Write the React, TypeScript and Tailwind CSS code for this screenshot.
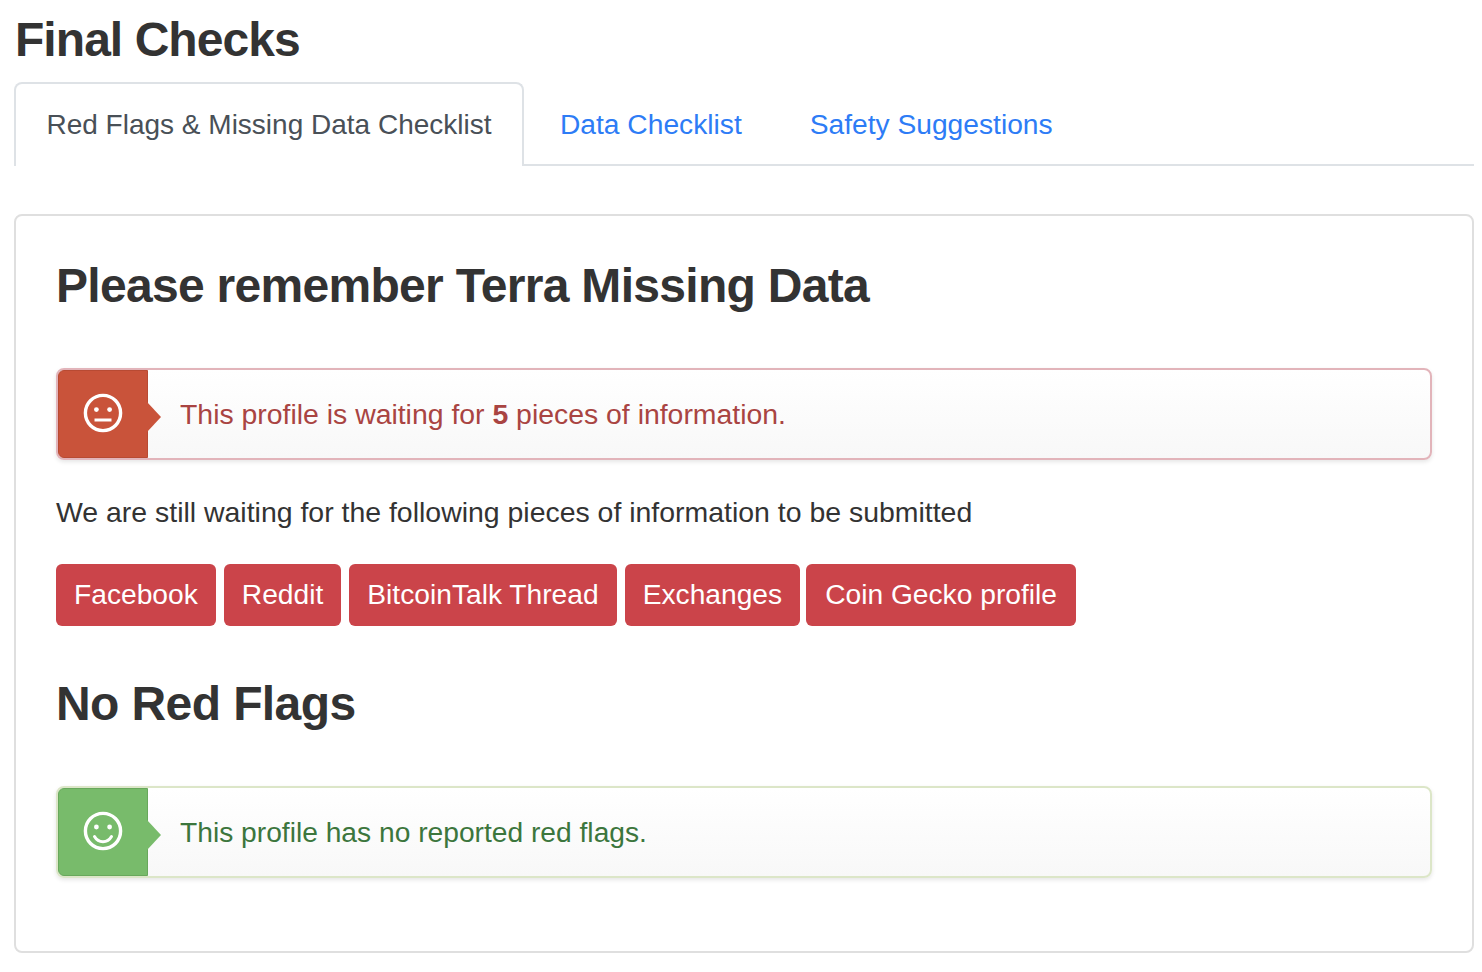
import React from 'react';

const MISSING = ['Facebook', 'Reddit', 'BitcoinTalk Thread', 'Exchanges', 'Coin Gecko profile'];

const Face: React.FC<{ smile?: boolean }> = ({ smile }) => (
  <svg width="40" height="40" viewBox="0 0 40 40" fill="none" stroke="white" strokeWidth="3.4">
    <circle cx="20" cy="20" r="17.6" />
    <circle cx="13.400" cy={smile ? 16 : 16.600} r="2.400" fill="white" stroke="none" />
    <circle cx="26.600" cy={smile ? 16 : 16.600} r="2.400" fill="white" stroke="none" />
    {smile ? (
      <path d="M11.500 25.500c2 3.500 5 5.200 8.500 5.200s6.500-1.700 8.500-5.200" strokeWidth="3" strokeLinecap="round" />
    ) : (
      <path d="M11.500 27h17" strokeWidth="3" />
    )}
  </svg>
);

export default function App() {
  return (
    <div className="min-h-[972px] bg-white pl-[14px] pr-2 font-['Liberation_Sans',Arial,sans-serif] text-[#333] overflow-hidden">
      <h1 className="pt-[13px] pl-px text-[48px] leading-[54px] font-bold text-[#333] tracking-[-0.95px] h-[82px]">Final Checks</h1>

      <div className="flex items-end h-[84px] border-b-2 border-[#dee2e6] text-[28.2px]">
        <div className="h-[84px] -mb-[2px] w-[510px] flex items-center justify-center bg-white border-2 border-b-0 border-[#dee2e6] rounded-t-lg text-[#495057] text-[28px]">
          Red Flags &amp; Missing Data Checklist
        </div>
        <a className="ml-9 h-[82px] flex items-center pt-[2px] text-[#2d7cf6]">Data Checklist</a>
        <a className="ml-[68px] h-[82px] flex items-center pt-[2px] text-[#2d7cf6]">Safety Suggestions</a>
      </div>

      <div className="mt-[48px] h-[739px] border-2 border-[#dfdfdf] rounded-lg px-[40px]">
        <h2 className="pt-[42px] text-[48px] leading-[56px] font-bold tracking-[-0.7px] text-[#333]">Please remember Terra Missing Data</h2>

        <div className="mt-[54px] h-[92px] flex border-2 border-[#e2b4ba] rounded-lg shadow-[0_2px_4px_rgba(0,0,0,0.1)] bg-gradient-to-b from-white to-[#f8f8f8]">
          <div className="relative w-[90px] flex items-center justify-center bg-[#c9533a] border border-[#b84a33] rounded-l-md pb-[2px]">
            <Face />
            <span className="absolute left-full top-[calc(50%+3px)] -translate-y-1/2 border-y-[15px] border-l-[14px] border-y-transparent border-l-[#c9533a]" />
          </div>
          <p className="pl-[32px] pt-[1px] flex items-center text-[28.4px] text-[#a94442]">
            <span>This profile is waiting for <b>5</b> pieces of information.</span>
          </p>
        </div>

        <p className="mt-[31px] text-[28.45px] leading-[42px] text-[#333]">We are still waiting for the following pieces of information to be submitted</p>

        <div className="mt-[31px] flex">
          {MISSING.map((m, i) => (
            <span key={m} className={`h-[62px] flex items-center pb-[1px] bg-[#cb444a] text-white text-[28.2px] rounded-md ${i === 4 ? 'px-[19px]' : 'px-[18px]'} ${i === 3 ? 'mr-[6px]' : 'mr-2'}`}>{m}</span>
          ))}
        </div>

        <h2 className="mt-[50px] text-[48px] leading-[56px] font-bold tracking-[-0.6px] text-[#333]">No Red Flags</h2>

        <div className="mt-[54px] h-[92px] flex border-2 border-[#dce6c8] rounded-lg shadow-[0_2px_4px_rgba(0,0,0,0.1)] bg-gradient-to-b from-white to-[#f8f8f8]">
          <div className="relative w-[90px] flex items-center justify-center bg-[#78bb6b] border border-[#68a85c] rounded-l-md pb-[2px]">
            <Face smile />
            <span className="absolute left-full top-[calc(50%+3px)] -translate-y-1/2 border-y-[15px] border-l-[14px] border-y-transparent border-l-[#78bb6b]" />
          </div>
          <p className="pl-[32px] pt-[1px] flex items-center text-[28.2px] text-[#3c763d]">This profile has no reported red flags.</p>
        </div>
      </div>
    </div>
  );
}
